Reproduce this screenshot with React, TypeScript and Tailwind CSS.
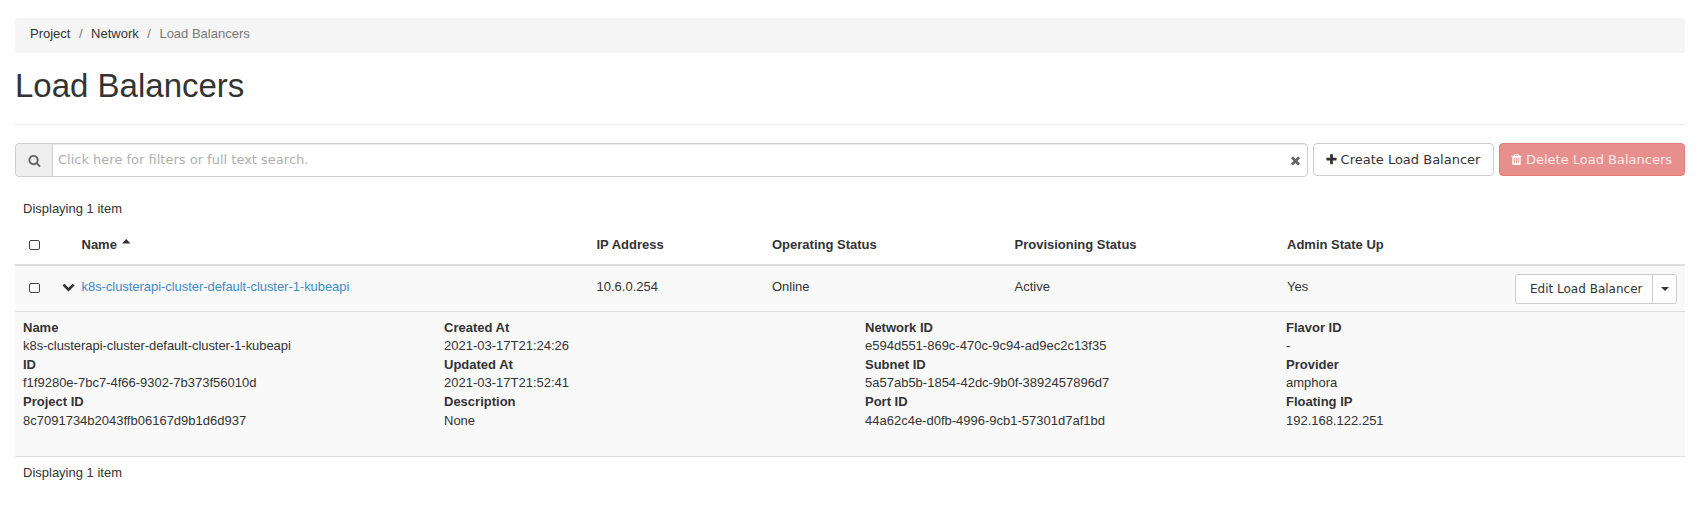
import React from "react";

const ICONS = {
  search:
    "M1216 832q0-185-131.5-316.5t-316.5-131.5-316.5 131.5-131.5 316.5 131.5 316.5 316.5 131.5 316.5-131.5 131.5-316.5zm512 832q0 52-38 90t-90 38q-54 0-90-38l-343-342q-179 124-399 124-143 0-273.5-55.5t-225-150-150-225-55.5-273.5 55.5-273.5 150-225 225-150 273.5-55.5 273.5 55.5 225 150 150 225 55.5 273.5q0 220-124 399l343 343q37 37 37 90z",
  plus: "M1600 736v192q0 40-28 68t-68 28h-416v416q0 40-28 68t-68 28h-192q-40 0-68-28t-28-68v-416h-416q-40 0-68-28t-28-68v-192q0-40 28-68t68-28h416v-416q0-40 28-68t68-28h192q40 0 68 28t28 68v416h416q40 0 68 28t28 68z",
  times:
    "M1490 1322q0 40-28 68l-136 136q-28 28-68 28t-68-28l-294-294-294 294q-28 28-68 28t-68-28l-136-136q-28-28-28-68t28-68l294-294-294-294q-28-28-28-68t28-68l136-136q28-28 68-28t68 28l294 294 294-294q28-28 68-28t68 28l136 136q28 28 28 68t-28 68l-294 294 294 294q28 28 28 68z",
  trash:
    "M704 1376v-704q0-14-9-23t-23-9h-64q-14 0-23 9t-9 23v704q0 14 9 23t23 9h64q14 0 23-9t9-23zm256 0v-704q0-14-9-23t-23-9h-64q-14 0-23 9t-9 23v704q0 14 9 23t23 9h64q14 0 23-9t9-23zm256 0v-704q0-14-9-23t-23-9h-64q-14 0-23 9t-9 23v704q0 14 9 23t23 9h64q14 0 23-9t9-23zm-544-992h448l-48-117q-7-9-17-11h-317q-10 2-17 11zm928 32v64q0 14-9 23t-23 9h-96v948q0 83-47 143.5t-113 60.5h-832q-66 0-113-58.5t-47-141.5v-952h-96q-14 0-23-9t-9-23v-64q0-14 9-23t23-9h309l70-167q15-37 54-63t79-26h320q40 0 79 26t54 63l70 167h309q14 0 23 9t9 23z",
  chevronDown:
    "M1683 808l-742 741q-19 19-45 19t-45-19l-742-741q-19-19-19-45.5t19-45.5l166-165q19-19 45-19t45 19l531 531 531-531q19-19 45-19t45 19l166 165q19 19 19 45.5t-19 45.5z",
};

function Icon({ name, className = "" }: { name: keyof typeof ICONS; className?: string }) {
  return (
    <svg viewBox="0 0 1792 1792" fill="currentColor" className={`size-[13px] shrink-0 ${className}`}>
      <path d={ICONS[name]} />
    </svg>
  );
}

function Checkbox() {
  return <span className="ml-3.5 block h-2.5 w-[11px] rounded-[2px] border border-[#444] bg-white" />;
}

const GRID = "grid grid-cols-[47px_19.5px_515px_175.5px_242.5px_272.5px_1fr]";

const DETAILS: [string, string][][] = [
  [
    ["Name", "k8s-clusterapi-cluster-default-cluster-1-kubeapi"],
    ["ID", "f1f9280e-7bc7-4f66-9302-7b373f56010d"],
    ["Project ID", "8c7091734b2043ffb06167d9b1d6d937"],
  ],
  [
    ["Created At", "2021-03-17T21:24:26"],
    ["Updated At", "2021-03-17T21:52:41"],
    ["Description", "None"],
  ],
  [
    ["Network ID", "e594d551-869c-470c-9c94-ad9ec2c13f35"],
    ["Subnet ID", "5a57ab5b-1854-42dc-9b0f-3892457896d7"],
    ["Port ID", "44a62c4e-d0fb-4996-9cb1-57301d7af1bd"],
  ],
  [
    ["Flavor ID", "-"],
    ["Provider", "amphora"],
    ["Floating IP", "192.168.122.251"],
  ],
];

export default function App() {
  return (
    <div className="h-[509px] overflow-hidden bg-white px-[15px] pt-[18px] font-['Liberation_Sans',Arial,sans-serif] text-[13px] leading-[18.57px] text-[#333]">
      <ol className="flex h-[35px] rounded bg-[#f5f5f5] px-[15px] pt-[7px]">
        <li>Project</li>
        <li className="pl-[8.5px] pr-[8.5px] text-[#777]">/</li>
        <li>Network</li>
        <li className="pl-[8.5px] pr-[8.5px] text-[#777]">/</li>
        <li className="text-[#777]">Load Balancers</li>
      </ol>

      <h1 className="mt-[15px] h-[57px] border-b border-[#eee] text-[33px] leading-9">Load Balancers</h1>

      <div className="mt-[18px] flex h-[34px] items-start font-['DejaVu_Sans',sans-serif]">
        <div className="flex h-[34px] w-[1293px] rounded border border-[#ccc]">
          <span className="flex w-[37px] items-center justify-center rounded-l-[3px] border-r border-[#ccc] bg-[#eee] text-[#666]">
            <Icon name="search" />
          </span>
          <span className="flex flex-1 items-center rounded-r-[3px] px-[5px] shadow-[inset_0_1px_1px_rgba(0,0,0,0.075)]">
            <span className="flex-1 pt-px text-[#b0b0b0]">Click here for filters or full text search.</span>
            <Icon name="times" className="text-[#666]" />
          </span>
        </div>
        <button className="ml-[5px] flex h-[33px] w-[181px] items-center justify-center gap-[3px] rounded border border-[#ccc] pr-[2px] pt-px">
          <Icon name="plus" className="-mt-px" />
          Create Load Balancer
        </button>
        <button className="ml-[5px] flex h-[33px] w-[186px] items-center justify-center gap-[3px] rounded border border-[#e27c79] bg-[#e68f8c] pr-[2px] pt-px text-[#faeaea]">
          <Icon name="trash" className="-mt-px text-white" />
          Delete Load Balancers
        </button>
      </div>

      <div className="mt-[23px] h-7 px-2">Displaying 1 item</div>

      <div className={`${GRID} h-[38px] border-b-2 border-[#ddd] pt-2 font-bold`}>
        <div className="pt-[4px]">
          <Checkbox />
        </div>
        <div />
        <div className="flex">
          Name
          <svg viewBox="0 0 8 4" preserveAspectRatio="none" className="ml-[5px] mt-[3px] h-[4.5px] w-[8.5px]">
            <path d="M0 4L4 0L8 4Z" fill="#333" />
          </svg>
        </div>
        <div>IP Address</div>
        <div>Operating Status</div>
        <div>Provisioning Status</div>
        <div>Admin State Up</div>
      </div>

      <div className={`${GRID} h-[46px] border-b border-[#ddd] bg-[#f9f9f9] pt-3`}>
        <div className="pt-[5px]">
          <Checkbox />
        </div>
        <div>
          <Icon name="chevronDown" className="mt-[2px]" />
        </div>
        <a className="tracking-[-0.05px] text-[#428bca]">k8s-clusterapi-cluster-default-cluster-1-kubeapi</a>
        <div>10.6.0.254</div>
        <div>Online</div>
        <div>Active</div>
        <div className="flex justify-between pr-2">
          Yes
          <div className="-mt-1 flex h-[30px] w-[162px] rounded-[3px] border border-[#ccc] bg-white font-['DejaVu_Sans',sans-serif] text-xs">
            <span className="flex w-[136px] items-center pl-3.5">Edit Load Balancer</span>
            <span className="flex flex-1 items-center justify-center border-l border-[#ccc]">
              <svg viewBox="0 0 8 4" className="h-1 w-2">
                <path d="M0 0L4 4L8 0Z" fill="#333" />
              </svg>
            </span>
          </div>
        </div>
      </div>

      <div className="grid h-[145px] grid-cols-[421px_421px_421px_1fr] border-b border-[#ddd] bg-[#f9f9f9] pl-2 pt-[6.75px]">
        {DETAILS.map((column, i) => (
          <dl key={i}>
            {column.map(([term, value]) => (
              <React.Fragment key={term}>
                <dt className="font-bold">{term}</dt>
                <dd className={value.startsWith("k8s") ? "tracking-[-0.05px]" : ""}>{value}</dd>
              </React.Fragment>
            ))}
          </dl>
        ))}
      </div>

      <div className="px-2 pt-[7px]">Displaying 1 item</div>
    </div>
  );
}
